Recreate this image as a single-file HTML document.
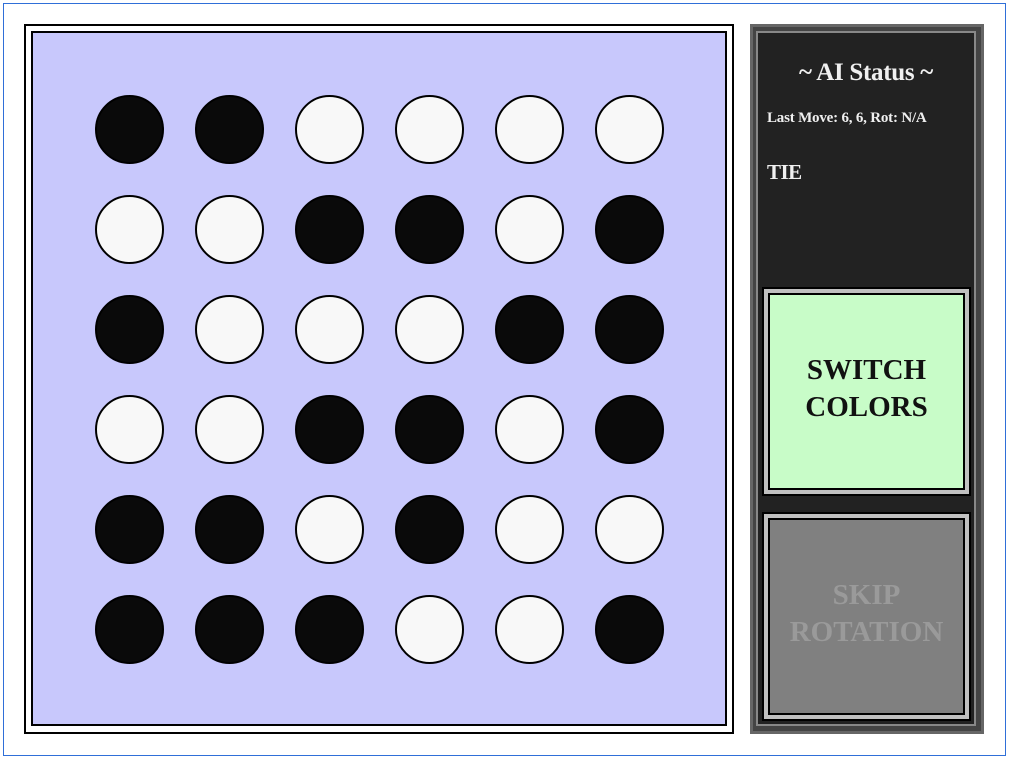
<!DOCTYPE html>
<html><head><style>
*{margin:0;padding:0;box-sizing:border-box}
body{width:1011px;height:761px;background:#fff;position:relative;overflow:hidden;font-family:"Liberation Serif",serif;font-weight:bold}
.a{position:absolute}
.c{position:absolute;width:69px;height:69px;border-radius:50%;border:2px solid #000}
.b{background:#0a0a0a}.w{background:#f8f8f8}
</style></head><body>
<div class="a" style="left:3px;top:3px;width:1003px;height:753px;border:1px solid #2f6fd8"></div>
<div class="a" style="left:24px;top:24px;width:710px;height:710px;border:2px solid #000"></div>
<div class="a" style="left:31px;top:31px;width:696px;height:695px;border:2px solid #000;background:#c8c8fc"></div>
<div id="g"></div>
<div class="a" style="left:750px;top:24px;width:234px;height:710px;background:#444;border:3px solid #666"></div>
<div class="a" style="left:756px;top:31px;width:220px;height:695px;background:#222;border:2px solid #888"></div>
<div class="a" style="left:758px;top:59px;width:216px;text-align:center;color:#f0f0f0;font-size:25px;letter-spacing:-0.3px">~ AI Status ~</div>
<div class="a" style="left:767px;top:110px;color:#f0f0f0;font-size:15px;letter-spacing:-0.2px">Last Move: 6, 6, Rot: N/A</div>
<div class="a" style="left:767px;top:160px;color:#f0f0f0;font-size:21px;letter-spacing:-0.5px">TIE</div>
<div class="a" style="left:762px;top:287px;width:209px;height:209px;background:#c0c0c0;border:2px solid #000"></div>
<div class="a" style="left:768px;top:293px;width:197px;height:197px;background:#c8fcc8;border:2px solid #000;text-align:center;font-size:29px;line-height:37px;color:#111;padding-top:57px">SWITCH<br>COLORS</div>
<div class="a" style="left:762px;top:512px;width:209px;height:209px;background:#c0c0c0;border:2px solid #000"></div>
<div class="a" style="left:768px;top:518px;width:197px;height:197px;background:#808080;border:2px solid #000;text-align:center;font-size:29px;line-height:37px;color:#9a9a9a;padding-top:57px">SKIP<br>ROTATION</div>
<script>
var p=["bbwwww","wwbbwb","bwwwbb","wwbbwb","bbwbww","bbbwwb"],h="";
for(var r=0;r<6;r++)for(var c=0;c<6;c++)h+='<div class="c '+p[r][c]+'" style="left:'+(95+c*100)+'px;top:'+(95+r*100)+'px"></div>';
document.getElementById("g").innerHTML=h;
</script>
</body></html>
